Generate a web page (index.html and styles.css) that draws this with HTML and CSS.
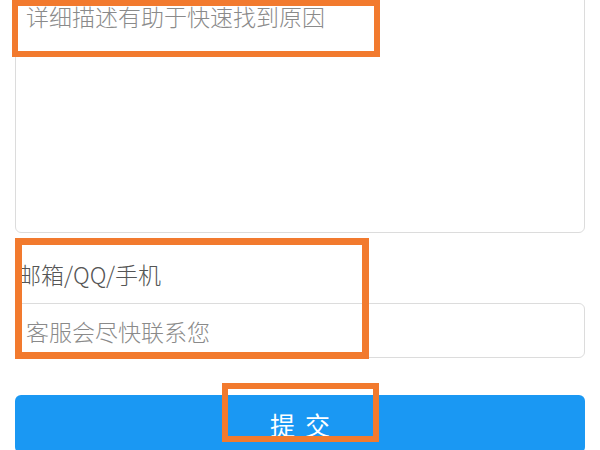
FILE: index.html
```html
<!DOCTYPE html>
<html lang="zh-CN">
<head>
<meta charset="utf-8">
<link rel="stylesheet" href="styles.css">
</head>
<body>
<div class="page">
  <div class="textarea"><span class="ph">详细描述有助于快速找到原因</span></div>
  <div class="label">邮箱/QQ/手机</div>
  <div class="input"><span class="ph">客服会尽快联系您</span></div>
  <button class="submit">提交</button>
</div>
<div class="mark mark1"></div>
<div class="mark mark2"></div>
<div class="mark mark3"></div>
</body>
</html>
```
FILE: styles.css
```css
html, body {
  margin: 0;
  padding: 0;
  background: #fff;
  overflow: hidden;
}
body {
  width: 600px;
  height: 450px;
  position: relative;
  font-family: "Noto Sans CJK SC", "Noto Sans", sans-serif;
}
.page {
  display: flex;
  flex-direction: column;
  padding: 0 15px;
}
.textarea {
  margin-top: -12px;
  height: 245px;
  border: 1px solid #dcdcdc;
  border-radius: 6px;
  padding: 12px 10px 0 10px;
  box-sizing: border-box;
}
.ph {
  font-size: 23px;
  line-height: 30px;
  color: #8a8a8a;
  font-weight: 300;
}
.label {
  margin-top: 26px;
  margin-left: 3px;
  font-size: 23px;
  line-height: 30px;
  color: #555;
  font-weight: 300;
}
.input {
  margin-top: 14px;
  height: 55px;
  border: 1px solid #dcdcdc;
  border-radius: 6px;
  box-sizing: border-box;
  padding: 0 10px;
  display: flex;
  align-items: center;
}
.submit {
  margin-top: 37px;
  height: 58px;
  border: none;
  border-radius: 6px;
  background: #1a98f3;
  color: #fff;
  font-family: "Noto Sans CJK SC", sans-serif;
  font-size: 25px;
  letter-spacing: 10px;
  padding: 0 0 0 10px;
  display: flex;
  justify-content: center;
  align-items: center;
  font-weight: 400;
}
.mark {
  position: absolute;
  border: 6px solid #f27a2e;
  box-sizing: border-box;
}
.mark1 { left: 12px; top: 0; width: 368px; height: 57px; }
.mark2 { left: 15px; top: 238px; width: 354px; height: 121px; border-width: 7px; }
.mark3 { left: 222px; top: 383px; width: 157px; height: 59px; }
```
